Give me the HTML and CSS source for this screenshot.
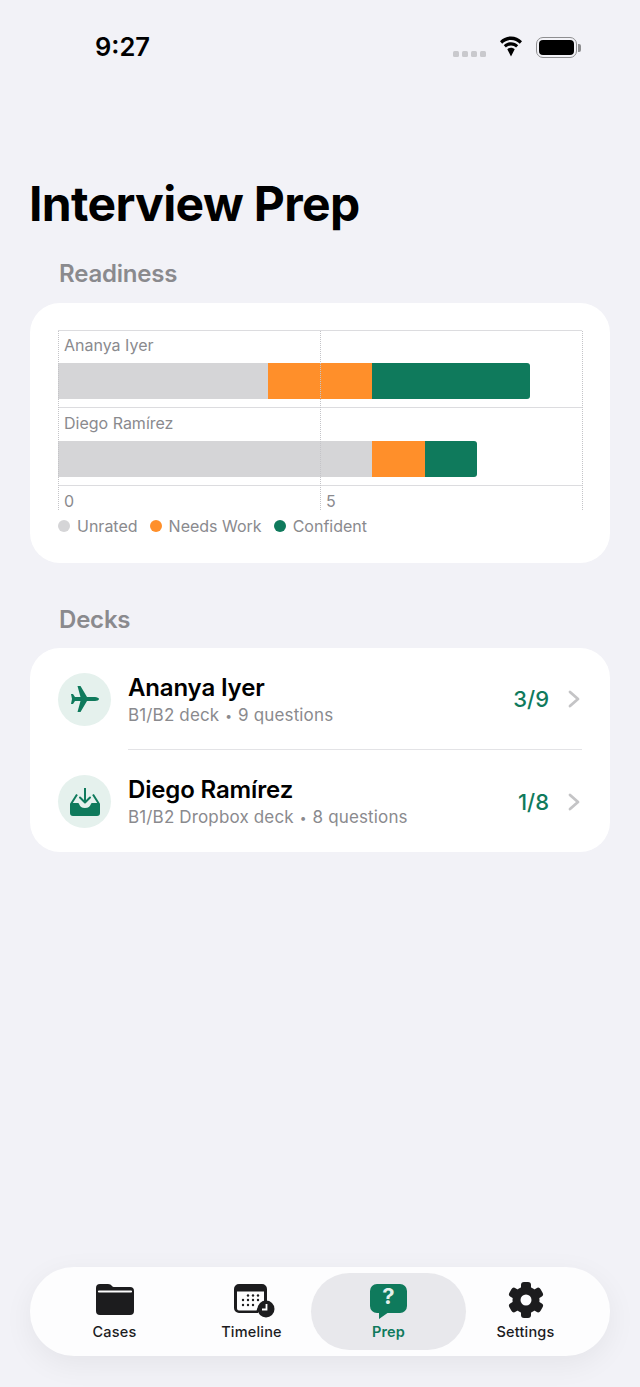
FILE: index.html
```html
<!DOCTYPE html>
<html lang="en">
<head>
<meta charset="utf-8">
<title>Interview Prep</title>
<link rel="stylesheet" href="styles.css">
</head>
<body>
<div class="screen">
  <header class="status">
    <span class="time">9:27</span>
    <div class="status-icons">
      <div class="signal"><i></i><i></i><i></i><i></i></div>
      <svg class="wifi" viewBox="0 0 24 20" preserveAspectRatio="none"><path d="M12 3.800c3.400 0 6.500 1.300 8.800 3.500l2.200-2.300C20.100 2.200 16.300.5 12 .5S3.900 2.200 1 5l2.200 2.300C5.500 5.100 8.600 3.800 12 3.800z" fill="#000"/><path d="M12 9c2 0 3.800.8 5.100 2l2.100-2.200C17.300 7 14.800 5.900 12 5.900S6.700 7 4.800 8.800L6.900 11c1.300-1.200 3.100-2 5.100-2z" fill="#000"/><path d="M12 11.200c-1.400 0-2.700.5-3.700 1.400l3.700 6.900 3.700-6.900c-1-.9-2.300-1.400-3.700-1.400z" fill="#000"/></svg>
      <div class="battery"><div class="battery-body"><div class="battery-fill"></div></div><div class="battery-cap"></div></div>
    </div>
  </header>

  <h1 class="title">Interview Prep</h1>

  <h2 class="section">Readiness</h2>
  <section class="card chart-card">
    <div class="chart">
      <div class="grid-v g0"></div>
      <div class="grid-v g5"></div>
      <div class="grid-v g10"></div>
      <div class="row">
        <div class="row-label">Ananya Iyer</div>
        <div class="bar"><div class="seg unrated s4"></div><div class="seg work s2"></div><div class="seg conf s3"></div></div>
      </div>
      <div class="row">
        <div class="row-label">Diego Ramírez</div>
        <div class="bar"><div class="seg unrated s6"></div><div class="seg work s1"></div><div class="seg conf s1"></div></div>
      </div>
      <div class="axis"><span class="tick">0</span><span class="tick">5</span></div>
    </div>
    <div class="legend">
      <span class="key"><i class="dot unrated"></i>Unrated</span>
      <span class="key"><i class="dot work"></i>Needs Work</span>
      <span class="key"><i class="dot conf"></i>Confident</span>
    </div>
  </section>

  <h2 class="section decks-head">Decks</h2>
  <section class="card decks">
    <div class="deck">
      <div class="deck-icon">
        <svg class="plane" viewBox="0 0 28 26"><path d="M28 13c0 1-2 2-4 2h-8L9.500 26H6.500l3-11H4l-2 3H0l1-5-1-5h2l2 3h5.500l-3-11h3L16 11h8c2 0 4 1 4 2z" fill="#0f7a5c"/></svg>
      </div>
      <div class="deck-text">
        <div class="deck-name">Ananya Iyer</div>
        <div class="deck-sub">B1/B2 deck <span class="sep">•</span> 9 questions</div>
      </div>
      <div class="deck-count">3/9</div>
      <svg class="chev" viewBox="0 0 12 18"><path d="M2 2l8 7-8 7" fill="none" stroke="#c4c4c6" stroke-width="2.800" stroke-linecap="round" stroke-linejoin="round"/></svg>
    </div>
    <div class="deck deck-b">
      <div class="deck-icon">
        <svg class="tray" viewBox="0 0 30 28"><path d="M15 0v14" stroke="#0f7a5c" stroke-width="2" stroke-linecap="round" fill="none"/><path d="M10 9.500l5 5 5-5" stroke="#0f7a5c" stroke-width="2" stroke-linecap="round" stroke-linejoin="round" fill="none"/><path d="M7 6.500l-6 9.500h7c.8 3 3.500 5 7 5s6.200-2 7-5h7l-6-9.500" stroke="#0f7a5c" stroke-width="2" stroke-linejoin="round" fill="none"/><path d="M0 16h8.500c.8 3 3.300 4.800 6.500 4.800s5.700-1.800 6.500-4.800H30v9a3 3 0 0 1-3 3H3a3 3 0 0 1-3-3z" fill="#0f7a5c"/></svg>
      </div>
      <div class="deck-text">
        <div class="deck-name">Diego Ramírez</div>
        <div class="deck-sub">B1/B2 Dropbox deck <span class="sep">•</span> 8 questions</div>
      </div>
      <div class="deck-count">1/8</div>
      <svg class="chev" viewBox="0 0 12 18"><path d="M2 2l8 7-8 7" fill="none" stroke="#c4c4c6" stroke-width="2.800" stroke-linecap="round" stroke-linejoin="round"/></svg>
    </div>
  </section>

  <nav class="tabbar">
    <div class="tab">
      <svg class="tab-icon i-folder" viewBox="0 0 38 31"><path d="M4 0h8c2 0 3 .8 4 2 .6.7 1.200 1 2.400 1H34a4 4 0 0 1 4 4v20a4 4 0 0 1-4 4H4a4 4 0 0 1-4-4V4a4 4 0 0 1 4-4z" fill="#1c1c1e"/><path d="M3 7.500h32" stroke="#fdfdfe" stroke-width="2.200" stroke-linecap="round"/></svg>
      <span class="tab-label">Cases</span>
    </div>
    <div class="tab">
      <svg class="tab-icon i-cal" viewBox="0 0 41 34"><path d="M5 0h23a5 5 0 0 1 5 5v15a9 9 0 0 0-9 9H5a5 5 0 0 1-5-5V5a5 5 0 0 1 5-5z" fill="#1c1c1e"/><path d="M3 7.500h27v12a10 10 0 0 0-7.500 7H5a2 2 0 0 1-2-2z" fill="#fdfdfe"/><g fill="#1c1c1e"><circle cx="14" cy="11.500" r="1.200"/><circle cx="19" cy="11.500" r="1.200"/><circle cx="24" cy="11.500" r="1.200"/><circle cx="9" cy="16" r="1.200"/><circle cx="14" cy="16" r="1.200"/><circle cx="19" cy="16" r="1.200"/><circle cx="24" cy="16" r="1.200"/><circle cx="9" cy="21" r="1.200"/><circle cx="14" cy="21" r="1.200"/><circle cx="19" cy="21" r="1.200"/></g><circle cx="32" cy="25" r="8.500" fill="#1c1c1e"/><path d="M32.500 20v5.500H28" stroke="#fff" stroke-width="1.800" fill="none"/></svg>
      <span class="tab-label">Timeline</span>
    </div>
    <div class="tab active">
      <svg class="tab-icon i-prep" viewBox="0 0 37 35"><path d="M7 0h23a7 7 0 0 1 7 7v15a7 7 0 0 1-7 7H17.500L9 35v-6H7a7 7 0 0 1-7-7V7a7 7 0 0 1 7-7z" fill="#0f7a5c"/></svg>
      <span class="q">?</span>
      <span class="tab-label">Prep</span>
    </div>
    <div class="tab">
      <svg class="tab-icon i-gear" viewBox="0 0 36 36"><g fill="#1c1c1e"><rect x="13" y="0" width="10" height="36" rx="3"/><rect x="13" y="0" width="10" height="36" rx="3" transform="rotate(60 18 18)"/><rect x="13" y="0" width="10" height="36" rx="3" transform="rotate(120 18 18)"/><circle cx="18" cy="18" r="13.500"/></g><circle cx="18" cy="18" r="5.500" fill="#fdfdfe"/></svg>
      <span class="tab-label">Settings</span>
    </div>
  </nav>
</div>
</body>
</html>
```
FILE: styles.css
```css
* { box-sizing: border-box; }
html, body { margin: 0; padding: 0; }
body {
  width: 640px;
  height: 1387px;
  background: #f2f2f7;
  font-family: Inter, "Liberation Sans", sans-serif;
  overflow: hidden;
}
.screen {
  height: 1387px;
  padding: 0 30px;
  display: flex;
  flex-direction: column;
}
.status {
  height: 167px;
  padding: 31px 29px 0 65px;
  display: flex;
  justify-content: space-between;
  align-items: flex-start;
}
.time {
  font-size: 25.5px;
  line-height: 32px;
  font-weight: 600;
  color: #000;
}
.status-icons {
  display: flex;
  align-items: flex-start;
  padding-top: 6px;
}
.signal {
  display: flex;
  gap: 3px;
  margin-top: 14px;
  margin-right: 13px;
}
.signal i {
  width: 6px;
  height: 6px;
  border-radius: 1.500px;
  background: #c9c9cd;
}
.wifi { width: 24px; height: 21px; margin-top: -1px; margin-right: 13px; }
.battery { display: flex; align-items: center; height: 21px; }
.battery-body {
  width: 41px;
  height: 21px;
  border: 1.500px solid #8e8e90;
  border-radius: 7px;
  padding: 2px;
}
.battery-fill { width: 100%; height: 100%; background: #000; border-radius: 4px; }
.battery-cap {
  width: 3px;
  height: 8px;
  margin-left: 1px;
  background: #8e8e90;
  border-radius: 0 2px 2px 0;
}
.title {
  margin: 0 0 0 -1px;
  height: 74px;
  font-size: 48px;
  line-height: 74px;
  font-weight: 700;
  letter-spacing: -0.650px;
  color: #000;
}
.section {
  margin: 0;
  padding-left: 29px;
  font-size: 24px;
  line-height: 30px;
  font-weight: 600;
  color: #8a8a8e;
  letter-spacing: -0.200px;
}
.title + .section { margin-top: 18px; }
.card { background: #fff; border-radius: 30px; margin-top: 14px; }
.chart-card { height: 260px; padding: 27px 28px 0; }
.chart { position: relative; height: 180px; border-top: 1px solid #dcdcdf; }
.grid-v {
  position: absolute;
  top: 0;
  bottom: 0;
  width: 0;
  border-left: 1px dotted #c4c4c8;
  z-index: 2;
}
.g0 { left: 0; }
.g5 { left: 262px; }
.g10 { left: 524px; }
.row { height: 77px; border-bottom: 1px solid #dcdcdf; padding-top: 4px; }
.row + .row { height: 78px; padding-top: 5px; }
.row-label {
  padding-left: 6px;
  font-size: 16px;
  line-height: 20px;
  color: #8a8a8e;
  height: 28px;
}
.bar { display: flex; height: 36px; width: 524px; }
.seg { height: 100%; }
.s1 { width: 52.400px; }
.s2 { width: 104.800px; }
.s3 { width: 157.200px; }
.s4 { width: 209.600px; }
.s6 { width: 314.400px; }
.seg:last-child { border-radius: 0 3px 3px 0; }
.unrated { background: #d5d5d7; }
.work { background: #ff8f2a; }
.conf { background: #0f7a5c; }
.axis { display: flex; height: 25px; padding-top: 5px; }
.tick {
  width: 262px;
  padding-left: 6px;
  font-size: 16px;
  line-height: 20px;
  color: #8a8a8e;
}
.legend { display: flex; gap: 12px; margin-top: 6px; height: 20px; align-items: center; }
.key {
  display: flex;
  align-items: center;
  gap: 7px;
  font-size: 16px;
  line-height: 20px;
  color: #8a8a8e;
}
.dot { width: 12px; height: 12px; border-radius: 50%; }
.decks { height: 204px; padding: 1px 28px 0; margin-top: 13px; }
.decks-head { margin-top: 42px; }
.deck { position: relative; display: flex; align-items: center; height: 100px; }
.deck-b { height: 103px; padding-top: 2px; }
.deck-icon {
  width: 53px;
  height: 53px;
  border-radius: 50%;
  background: #e5f1ed;
  flex: none;
  display: flex;
  align-items: center;
  justify-content: center;
  margin-right: 17px;
}
.plane { width: 28px; height: 26px; }
.tray { width: 30px; height: 28px; }
.deck-text {
  flex: 1;
  align-self: stretch;
  padding-top: 2px;
  display: flex;
  flex-direction: column;
  justify-content: center;
}
.deck + .deck::before {
  content: "";
  position: absolute;
  left: 70px;
  right: 0;
  top: 0;
  border-top: 1px solid #e3e3e6;
}
.deck-name {
  font-size: 24px;
  line-height: 30px;
  font-weight: 600;
  letter-spacing: -0.150px;
  color: #000;
}
.deck-sub {
  font-size: 17px;
  line-height: 24px;
  letter-spacing: 0.150px;
  color: #8a8a8e;
}
.sep { font-size: 12px; padding: 0 1px; vertical-align: 1px; }
.deck-count {
  font-size: 22px;
  font-weight: 500;
  color: #0f7a5c;
  margin-right: 19px;
}
.chev { width: 12px; height: 18px; margin-right: 2px; flex: none; }
.tabbar {
  margin-top: auto;
  margin-bottom: 31px;
  height: 89px;
  border-radius: 44px;
  background: #fdfdfe;
  padding: 0 16px;
  display: grid;
  grid-template-columns: repeat(4, 1fr);
  box-shadow: 0 8px 30px rgba(0, 0, 0, 0.06);
}
.tab {
  position: relative;
  display: flex;
  flex-direction: column;
  align-items: center;
  justify-content: flex-end;
  padding-bottom: 14px;
}
.active::before {
  content: "";
  position: absolute;
  left: -9px;
  right: -9px;
  top: 6px;
  bottom: 6px;
  border-radius: 39px;
  background: #e8e8ec;
}
.tab-icon { position: relative; flex: none; }
.i-folder { width: 38px; height: 31px; margin-bottom: 7px; }
.i-cal { width: 41px; height: 34px; margin-bottom: 4px; margin-left: 6px; }
.i-prep { width: 37px; height: 35px; margin-bottom: 3px; }
.i-gear { width: 36px; height: 36px; margin-bottom: 4px; }
.q {
  position: absolute;
  top: 16px;
  left: 0;
  right: 0;
  text-align: center;
  font-size: 22px;
  line-height: 26px;
  font-weight: 700;
  color: #e4f1ec;
}
.tab-label {
  position: relative;
  font-size: 14.500px;
  line-height: 20px;
  font-weight: 500;
  color: #1c1c1e;
  letter-spacing: 0.200px;
}
.active .tab-label { color: #0f7a5c; font-weight: 600; }
```
